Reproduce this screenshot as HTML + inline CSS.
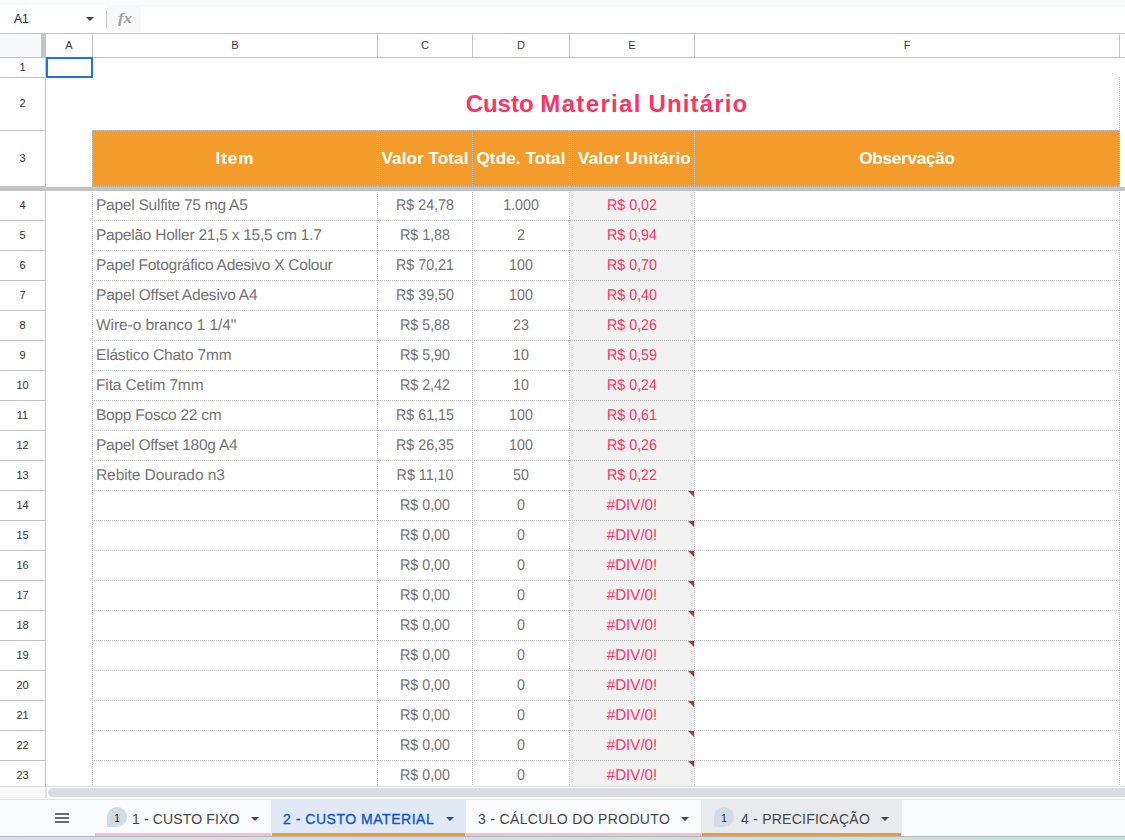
<!DOCTYPE html>
<html lang="pt-BR">
<head>
<meta charset="utf-8">
<title>Custo Material Unitário</title>
<style>
*{box-sizing:border-box;margin:0;padding:0}
html,body{width:1125px;height:840px;overflow:hidden;background:#fff}
body{font-family:"Liberation Sans",sans-serif;color:#444}
#app{position:relative;width:1125px;height:840px;overflow:hidden;background:#fff}
#app div,#app span,#app svg{position:absolute}
#topband{left:0;top:0;width:1125px;height:5px;background:#f9fbfd}
#fbar{left:0;top:5px;width:1125px;height:28px;background:#fff}
#namebox{left:14px;top:5px;height:18px;line-height:18px;font-size:12px;color:#202124;white-space:nowrap}
#nbarrow{left:86px;top:12px;width:0;height:0;border-left:4px solid transparent;border-right:4px solid transparent;border-top:4px solid #444}
#fsep{left:106px;top:6px;width:1px;height:17px;background:#c7c7c7}
#fstrip{left:107px;top:0;width:1018px;height:2px;background:#f8f8f8}
#fxbox{left:107px;top:0;width:34px;height:27px;background:#f8f8f8}
#fx{left:11px;top:4px;font-family:"Liberation Serif","DejaVu Serif",serif;font-style:italic;font-weight:bold;font-size:14px;line-height:20px;color:#a0a0a0;white-space:nowrap;transform:scaleX(1.2);transform-origin:0 50%}
#colhead{left:0;top:33px;width:1125px;height:25px;background:#fff;border-top:1px solid #c4c4c4;border-bottom:1px solid #c4c4c4}
#corner{left:0;top:0;width:41px;height:23px;background:#f8f9fa}
#vfreeze-top{left:41px;top:0;width:5px;height:23px;background:#c4c4c4}
.ch{top:0;height:23px;line-height:23px;text-align:center;font-size:11px;color:#3c3c3c}
.chl{top:0;width:1px;height:23px;background:#c4c4c4}
#rowhead{left:0;top:0;width:46px;height:787px}
#rhborder{left:45px;top:58px;width:1px;height:729px;background:#c4c4c4}
.rh{left:0;width:45px;text-align:center;font-size:11px;color:#333}
.rhl{left:0;width:45px;height:1px;background:#c4c4c4}
#grid{left:0;top:0;width:1125px;height:787px}
#title{left:94px;top:78px;width:1026px;height:52px;line-height:52px;text-align:center;font-weight:bold;font-size:24px;color:#fc3465;white-space:nowrap}
#title span{position:static!important}
#title .w2{letter-spacing:1.35px}
#title .w3{letter-spacing:1.15px}
#orange{left:92px;top:130px;width:1028px;height:57px;background:#f39c2b}
.hd{top:131px;height:55px;line-height:55px;text-align:center;color:#fff;font-weight:bold;font-size:17.2px;white-space:nowrap}
#ecol{left:570px;top:191px;width:124px;height:596px;background:#f2f2f2}
.c{margin-top:0px;height:30px;line-height:30px;font-size:15.5px;text-rendering:geometricPrecision;color:#737373;white-space:nowrap;text-align:center}
.ca{left:96px;text-align:left;letter-spacing:-.24px}
.cb{left:378px;width:94px;transform:scaleX(.92)}
.cc{left:473px;width:96px;transform:scaleX(.92)}
.cd{left:570px;width:124px;color:#ff3366;transform:scaleX(.92)}
.cd.er{transform:scaleX(.975)}
.tri{left:688px;width:0;height:0;border-left:6px solid transparent;border-top:6px solid #cc2a1f}
.hdot{left:92px;width:1028px;height:1px;background:repeating-linear-gradient(to right,#bdbdbd 0 1px,transparent 1px 2px)}
.vdot{top:192px;width:1px;height:595px;background:repeating-linear-gradient(to bottom,#bdbdbd 0 1px,transparent 1px 2px)}
.vdot.o{top:130px;height:57px;background:repeating-linear-gradient(to bottom,#c2c3c5 0 1px,transparent 1px 2px)}
#vdot2{left:1119px;top:77px;width:1px;height:53px;background:repeating-linear-gradient(to bottom,#bdbdbd 0 1px,transparent 1px 2px)}
#hdot-otop{left:92px;top:130px;width:1028px;height:1px;background:repeating-linear-gradient(to right,#c2c3c5 0 1px,transparent 1px 2px)}
#hdot-obot{left:92px;top:186px;width:1028px;height:1px;background:repeating-linear-gradient(to right,#c2c3c5 0 1px,transparent 1px 2px)}
#sel{left:46px;top:57px;width:47px;height:21px;border:2px solid #1a73e8}
#hfreeze{left:0;top:187px;width:1125px;height:4px;background:#c4c4c4}
#sbar{left:0;top:786px;width:1125px;height:14px;background:#fff;border-top:1px solid #dcdcdc;border-bottom:1px solid #e1e1e1}
#sbleft{left:0;top:0;width:45px;height:11px;background:#f8f8f8}
#sbdiv{left:45px;top:0;width:2px;height:11px;background:#e2e2e2}
#thumb{left:48px;top:1px;width:1100px;height:9px;border-radius:5px;background:#dadce0}
#tabs{left:0;top:800px;width:1125px;height:36px;background:#f9fbfd}
#ham{left:55px;top:13px}
.tab{top:0;height:36px}
.tab .tl{top:1px;height:36px;line-height:36px;font-size:14px;color:#444746;white-space:nowrap;letter-spacing:.2px}
.tab .ul{left:0;right:0;top:33px;height:3px;background:#f9bfcb}
.tab .ar{top:17px;width:0;height:0;border-left:4px solid transparent;border-right:4px solid transparent;border-top:4px solid #444746}
.badge{top:7px;width:20px;height:20px;line-height:23px;text-align:center;font-size:10px;color:#10263f;background:#d3dbe5;border-radius:10px 10px 10px 0}
.t1{left:95px;width:176px}
.t1 .badge{left:12px}.t1 .tl{left:37px;letter-spacing:.14px}.t1 .ar{left:156px}
.t2{left:271px;width:195px;background:#e1e9f7}
.t2 .tl{left:12px;color:#0b57d0;-webkit-text-stroke:.35px #0b57d0;letter-spacing:.52px}.t2 .ar{left:175px;border-top-color:#0b57d0}
.t2 .ul{background:#f39c2b;left:1px;right:1px}
.t3{left:466px;width:235px}
.t3 .tl{left:12px;letter-spacing:.33px}.t3 .ar{left:215px}
.t4{left:701px;width:201px;background:#e8eaed}
.t4 .badge{left:13px}.t4 .tl{left:40px;letter-spacing:.24px}.t4 .ar{left:180px}
.t4 .ul{background:#f39c2b;left:1px;right:1px}
#botline{left:0;top:836px;width:1125px;height:1px;background:#b4b6bd}
#botstrip{left:0;top:837px;width:1125px;height:3px;background:linear-gradient(to right,#dcdfee 0%,#d4e0ea 18%,#cce1e7 40%,#c8e4e2 70%,#c4e8dc 100%)}

</style>
</head>
<body>
<div id="app">
<div id="topband"></div>
<div id="fbar"><div id="namebox">A1</div><div id="nbarrow"></div><div id="fsep"></div><div id="fstrip"></div><div id="fxbox"><span id="fx">fx</span></div></div>
<div id="colhead">
<div id="corner"></div><div id="vfreeze-top"></div>
<div class="ch" style="left:46px;width:46px">A</div><div class="chl" style="left:92px"></div>
<div class="ch" style="left:93px;width:284px">B</div><div class="chl" style="left:377px"></div>
<div class="ch" style="left:378px;width:94px">C</div><div class="chl" style="left:472px"></div>
<div class="ch" style="left:473px;width:96px">D</div><div class="chl" style="left:569px"></div>
<div class="ch" style="left:570px;width:124px">E</div><div class="chl" style="left:694px"></div>
<div class="ch" style="left:695px;width:424px">F</div><div class="chl" style="left:1119px"></div>
</div>
<div id="rowhead">
<div id="rhborder"></div>
<div class="rh" style="top:58px;height:19px;line-height:19px">1</div><div class="rhl" style="top:77px"></div>
<div class="rh" style="top:77px;height:52px;line-height:52px">2</div><div class="rhl" style="top:130px"></div>
<div class="rh" style="top:131px;height:55px;line-height:55px">3</div><div class="rhl" style="top:186px"></div>
<div class="rh" style="top:191px;height:29px;line-height:29px">4</div><div class="rhl" style="top:220px"></div>
<div class="rh" style="top:221px;height:29px;line-height:29px">5</div><div class="rhl" style="top:250px"></div>
<div class="rh" style="top:251px;height:29px;line-height:29px">6</div><div class="rhl" style="top:280px"></div>
<div class="rh" style="top:281px;height:29px;line-height:29px">7</div><div class="rhl" style="top:310px"></div>
<div class="rh" style="top:311px;height:29px;line-height:29px">8</div><div class="rhl" style="top:340px"></div>
<div class="rh" style="top:341px;height:29px;line-height:29px">9</div><div class="rhl" style="top:370px"></div>
<div class="rh" style="top:371px;height:29px;line-height:29px">10</div><div class="rhl" style="top:400px"></div>
<div class="rh" style="top:401px;height:29px;line-height:29px">11</div><div class="rhl" style="top:430px"></div>
<div class="rh" style="top:431px;height:29px;line-height:29px">12</div><div class="rhl" style="top:460px"></div>
<div class="rh" style="top:461px;height:29px;line-height:29px">13</div><div class="rhl" style="top:490px"></div>
<div class="rh" style="top:491px;height:29px;line-height:29px">14</div><div class="rhl" style="top:520px"></div>
<div class="rh" style="top:521px;height:29px;line-height:29px">15</div><div class="rhl" style="top:550px"></div>
<div class="rh" style="top:551px;height:29px;line-height:29px">16</div><div class="rhl" style="top:580px"></div>
<div class="rh" style="top:581px;height:29px;line-height:29px">17</div><div class="rhl" style="top:610px"></div>
<div class="rh" style="top:611px;height:29px;line-height:29px">18</div><div class="rhl" style="top:640px"></div>
<div class="rh" style="top:641px;height:29px;line-height:29px">19</div><div class="rhl" style="top:670px"></div>
<div class="rh" style="top:671px;height:29px;line-height:29px">20</div><div class="rhl" style="top:700px"></div>
<div class="rh" style="top:701px;height:29px;line-height:29px">21</div><div class="rhl" style="top:730px"></div>
<div class="rh" style="top:731px;height:29px;line-height:29px">22</div><div class="rhl" style="top:760px"></div>
<div class="rh" style="top:761px;height:29px;line-height:29px">23</div>
</div>
<div id="grid">
<div id="title"><span class="w1">Custo</span> <span class="w2">Material</span> <span class="w3">Unitário</span></div>
<div id="orange"></div>
<div class="hd" style="left:93px;width:284px;letter-spacing:.9px">Item</div>
<div class="hd" style="left:378px;width:94px;letter-spacing:.04px">Valor Total</div>
<div class="hd" style="left:473px;width:96px;letter-spacing:.06px">Qtde. Total</div>
<div class="hd" style="left:572.5px;width:124px;letter-spacing:.08px">Valor Unitário</div>
<div class="hd" style="left:695px;width:424px;letter-spacing:-.3px">Observação</div>
<div id="ecol"></div>
<div class="c ca" style="top:191px">Papel Sulfite 75 mg A5</div><div class="c cb" style="top:191px">R$ 24,78</div><div class="c cc" style="top:191px">1.000</div><div class="c cd" style="top:191px">R$ 0,02</div>
<div class="c ca" style="top:221px">Papelão Holler 21,5 x 15,5 cm 1.7</div><div class="c cb" style="top:221px">R$ 1,88</div><div class="c cc" style="top:221px">2</div><div class="c cd" style="top:221px">R$ 0,94</div>
<div class="c ca" style="top:251px">Papel Fotográfico Adesivo X Colour</div><div class="c cb" style="top:251px">R$ 70,21</div><div class="c cc" style="top:251px">100</div><div class="c cd" style="top:251px">R$ 0,70</div>
<div class="c ca" style="top:281px;letter-spacing:-0.2px">Papel Offset Adesivo A4</div><div class="c cb" style="top:281px">R$ 39,50</div><div class="c cc" style="top:281px">100</div><div class="c cd" style="top:281px">R$ 0,40</div>
<div class="c ca" style="top:311px;letter-spacing:-0.07px">Wire-o branco 1 1/4"</div><div class="c cb" style="top:311px">R$ 5,88</div><div class="c cc" style="top:311px">23</div><div class="c cd" style="top:311px">R$ 0,26</div>
<div class="c ca" style="top:341px;letter-spacing:-0.18px">Elástico Chato 7mm</div><div class="c cb" style="top:341px">R$ 5,90</div><div class="c cc" style="top:341px">10</div><div class="c cd" style="top:341px">R$ 0,59</div>
<div class="c ca" style="top:371px;letter-spacing:-0.14px">Fita Cetim 7mm</div><div class="c cb" style="top:371px">R$ 2,42</div><div class="c cc" style="top:371px">10</div><div class="c cd" style="top:371px">R$ 0,24</div>
<div class="c ca" style="top:401px">Bopp Fosco 22 cm</div><div class="c cb" style="top:401px">R$ 61,15</div><div class="c cc" style="top:401px">100</div><div class="c cd" style="top:401px">R$ 0,61</div>
<div class="c ca" style="top:431px">Papel Offset 180g A4</div><div class="c cb" style="top:431px">R$ 26,35</div><div class="c cc" style="top:431px">100</div><div class="c cd" style="top:431px">R$ 0,26</div>
<div class="c ca" style="top:461px;letter-spacing:-0.08px">Rebite Dourado n3</div><div class="c cb" style="top:461px">R$ 11,10</div><div class="c cc" style="top:461px">50</div><div class="c cd" style="top:461px">R$ 0,22</div>
<div class="c cb" style="top:491px">R$ 0,00</div><div class="c cc" style="top:491px">0</div><div class="c cd er" style="top:491px">#DIV/0!</div><div class="tri" style="top:491px"></div>
<div class="c cb" style="top:521px">R$ 0,00</div><div class="c cc" style="top:521px">0</div><div class="c cd er" style="top:521px">#DIV/0!</div><div class="tri" style="top:521px"></div>
<div class="c cb" style="top:551px">R$ 0,00</div><div class="c cc" style="top:551px">0</div><div class="c cd er" style="top:551px">#DIV/0!</div><div class="tri" style="top:551px"></div>
<div class="c cb" style="top:581px">R$ 0,00</div><div class="c cc" style="top:581px">0</div><div class="c cd er" style="top:581px">#DIV/0!</div><div class="tri" style="top:581px"></div>
<div class="c cb" style="top:611px">R$ 0,00</div><div class="c cc" style="top:611px">0</div><div class="c cd er" style="top:611px">#DIV/0!</div><div class="tri" style="top:611px"></div>
<div class="c cb" style="top:641px">R$ 0,00</div><div class="c cc" style="top:641px">0</div><div class="c cd er" style="top:641px">#DIV/0!</div><div class="tri" style="top:641px"></div>
<div class="c cb" style="top:671px">R$ 0,00</div><div class="c cc" style="top:671px">0</div><div class="c cd er" style="top:671px">#DIV/0!</div><div class="tri" style="top:671px"></div>
<div class="c cb" style="top:701px">R$ 0,00</div><div class="c cc" style="top:701px">0</div><div class="c cd er" style="top:701px">#DIV/0!</div><div class="tri" style="top:701px"></div>
<div class="c cb" style="top:731px">R$ 0,00</div><div class="c cc" style="top:731px">0</div><div class="c cd er" style="top:731px">#DIV/0!</div><div class="tri" style="top:731px"></div>
<div class="c cb" style="top:761px">R$ 0,00</div><div class="c cc" style="top:761px">0</div><div class="c cd er" style="top:761px">#DIV/0!</div><div class="tri" style="top:761px"></div>
<div class="hdot" style="top:220px"></div><div class="hdot" style="top:250px"></div><div class="hdot" style="top:280px"></div><div class="hdot" style="top:310px"></div><div class="hdot" style="top:340px"></div><div class="hdot" style="top:370px"></div><div class="hdot" style="top:400px"></div><div class="hdot" style="top:430px"></div><div class="hdot" style="top:460px"></div><div class="hdot" style="top:490px"></div><div class="hdot" style="top:520px"></div><div class="hdot" style="top:550px"></div><div class="hdot" style="top:580px"></div><div class="hdot" style="top:610px"></div><div class="hdot" style="top:640px"></div><div class="hdot" style="top:670px"></div><div class="hdot" style="top:700px"></div><div class="hdot" style="top:730px"></div><div class="hdot" style="top:760px"></div>
<div class="vdot" style="left:92px"></div><div class="vdot" style="left:377px"></div><div class="vdot" style="left:472px"></div><div class="vdot" style="left:569px"></div><div class="vdot" style="left:694px"></div><div class="vdot" style="left:1119px"></div>
<div class="vdot o" style="left:92px"></div><div class="vdot o" style="left:377px"></div><div class="vdot o" style="left:472px"></div><div class="vdot o" style="left:569px"></div><div class="vdot o" style="left:694px"></div><div class="vdot o" style="left:1119px"></div><div id="vdot2"></div><div id="hdot-otop"></div><div id="hdot-obot"></div>
<div id="sel"></div>
<div id="hfreeze"></div>
</div>
<div id="sbar"><div id="sbleft"></div><div id="sbdiv"></div><div id="thumb"></div></div>
<div id="tabs">
<svg id="ham" width="14" height="10" viewBox="0 0 14 10"><rect x="0" y="0.2" width="14" height="1.6" fill="#484848"/><rect x="0" y="4.2" width="14" height="1.6" fill="#484848"/><rect x="0" y="8.2" width="14" height="1.6" fill="#484848"/></svg>
<div class="tab t1"><span class="badge">1</span><span class="tl">1 - CUSTO FIXO</span><span class="ar"></span><div class="ul"></div></div>
<div class="tab t2"><span class="tl">2 - CUSTO MATERIAL</span><span class="ar"></span><div class="ul"></div></div>
<div class="tab t3"><span class="tl">3 - CÁLCULO DO PRODUTO</span><span class="ar"></span><div class="ul"></div></div>
<div class="tab t4"><span class="badge">1</span><span class="tl">4 - PRECIFICAÇÃO</span><span class="ar"></span><div class="ul"></div></div>
</div>
<div id="botline"></div>
<div id="botstrip"></div>
</div>
</body>
</html>
